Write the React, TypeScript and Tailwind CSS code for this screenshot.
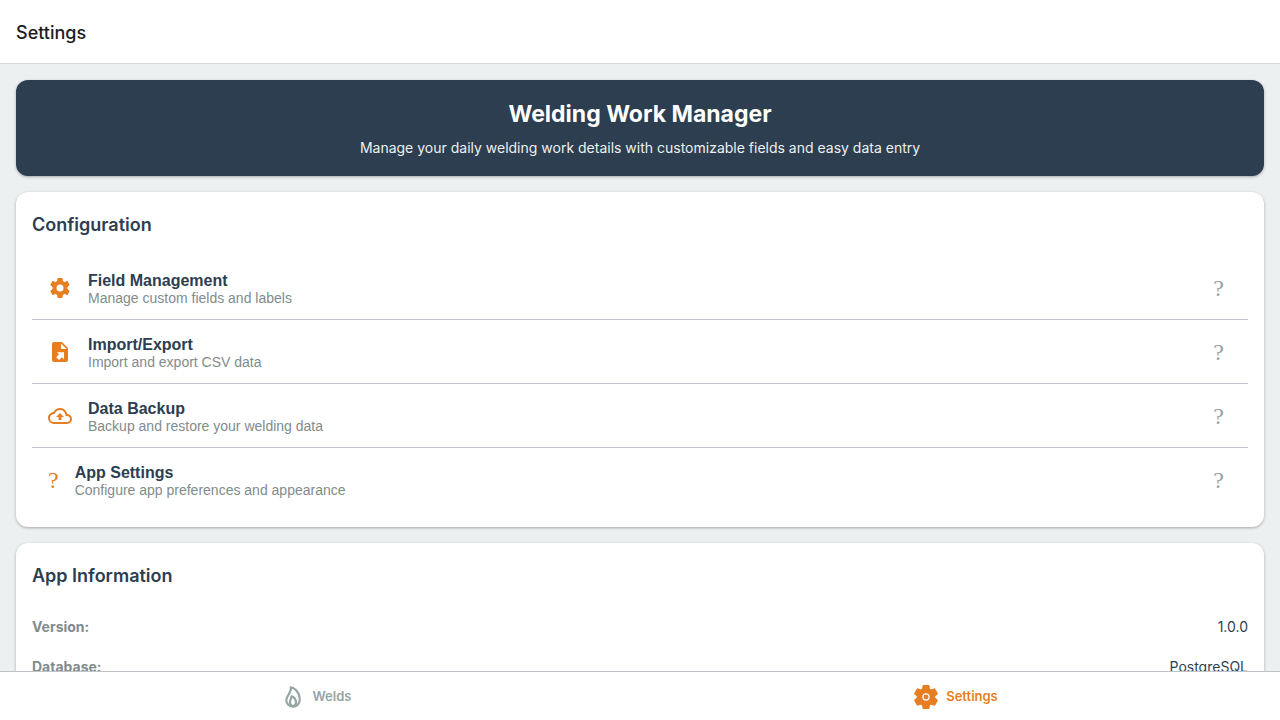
import type { ReactNode } from "react";
import { IoFlameOutline } from "react-icons/io5";

type IconProps = { path: string };

function Glyph({ path }: IconProps) {
  return (
    <svg viewBox="0 0 24 24" className="size-6 fill-current" aria-hidden="true">
      <path d={path} />
    </svg>
  );
}

const cogPath =
  "M12,15.5A3.5,3.5 0 0,1 8.5,12A3.5,3.5 0 0,1 12,8.5A3.5,3.5 0 0,1 15.5,12A3.5,3.5 0 0,1 12,15.5M19.43,12.97C19.47,12.65 19.5,12.33 19.5,12C19.5,11.67 19.47,11.34 19.43,11L21.54,9.37C21.73,9.22 21.78,8.95 21.66,8.73L19.66,5.27C19.54,5.05 19.27,4.96 19.05,5.05L16.56,6.05C16.04,5.66 15.5,5.32 14.87,5.07L14.5,2.42C14.46,2.18 14.25,2 14,2H10C9.75,2 9.54,2.18 9.5,2.42L9.13,5.07C8.5,5.32 7.96,5.66 7.44,6.05L4.95,5.05C4.73,4.96 4.46,5.05 4.34,5.27L2.34,8.73C2.21,8.95 2.27,9.22 2.46,9.37L4.57,11C4.53,11.34 4.5,11.67 4.5,12C4.5,12.33 4.53,12.65 4.57,12.97L2.46,14.63C2.27,14.78 2.21,15.05 2.34,15.27L4.34,18.73C4.46,18.95 4.73,19.03 4.95,18.95L7.44,17.94C7.96,18.34 8.5,18.68 9.13,18.93L9.5,21.58C9.54,21.82 9.75,22 10,22H14C14.25,22 14.46,21.82 14.5,21.58L14.87,18.93C15.5,18.67 16.04,18.34 16.56,17.94L19.05,18.95C19.27,19.03 19.54,18.95 19.66,18.73L21.66,15.27C21.78,15.05 21.73,14.78 21.54,14.63L19.43,12.97Z";
const filePath =
  "M6,2C4.89,2 4,2.9 4,4V20A2,2 0 0,0 6,22H18A2,2 0 0,0 20,20V8L14,2M13,3.5L18.5,9H13M8.93,12.22H16V19.29L13.88,17.17L11.05,20L8.22,17.17L11.05,14.35";
const cloudPath =
  "M19.35,10.04C18.67,6.59 15.64,4 12,4C9.11,4 6.6,5.64 5.35,8.04C2.34,8.36 0,10.91 0,14A6,6 0 0,0 6,20H19A5,5 0 0,0 24,15C24,12.36 21.95,10.22 19.35,10.04M19,18H6A4,4 0 0,1 2,14C2,11.95 3.53,10.24 5.56,10.03L6.63,9.92L7.13,8.97C8.08,7.14 9.94,6 12,6C14.62,6 16.88,7.86 17.39,10.43L17.69,11.93L19.22,12.04C20.78,12.14 22,13.45 22,15A3,3 0 0,1 19,18M8,13H10.55V16H13.45V13H16L12,9L8,13Z";

function TabGear() {
  return (
    <svg viewBox="1.5 1.5 21 21" className="size-6" aria-hidden="true">
      <path d={cogPath} fill="currentColor" stroke="currentColor" strokeWidth="1.2" strokeLinejoin="round" />
      <circle cx="12" cy="12" r="6" fill="currentColor" />
      <circle cx="12" cy="12" r="2.7" fill="none" stroke="white" strokeWidth="1.1" />
    </svg>
  );
}

const questionMark = (
  <span className="font-['Liberation_Serif',serif] text-2xl leading-6" aria-hidden="true">
    ?
  </span>
);

const options: { title: string; description: string; icon: ReactNode }[] = [
  { title: "Field Management", description: "Manage custom fields and labels", icon: <Glyph path={cogPath} /> },
  { title: "Import/Export", description: "Import and export CSV data", icon: <Glyph path={filePath} /> },
  { title: "Data Backup", description: "Backup and restore your welding data", icon: <Glyph path={cloudPath} /> },
  { title: "App Settings", description: "Configure app preferences and appearance", icon: questionMark },
];

const details = [
  { label: "Version:", value: "1.0.0" },
  { label: "Database:", value: "PostgreSQL" },
];

function Card({ title, children }: { title: string; children: ReactNode }) {
  return (
    <section className="rounded-xl bg-white p-4 shadow-[0_1px_3px_rgba(0,0,0,0.3)]">
      <h2 className="text-lg leading-[34px] font-semibold">{title}</h2>
      {children}
    </section>
  );
}

export default function App() {
  return (
    <div className="flex h-screen flex-col bg-[#ecf0f1] font-[Inter,sans-serif] text-[#2c3e50]">
      <header className="flex h-16 shrink-0 items-center border-b border-[#d8d8d8] bg-white px-4 pt-0.5">
        <h1 className="text-lg font-medium text-[#1c1c1e]">Settings</h1>
      </header>

      <main className="flex min-h-0 flex-1 flex-col gap-4 overflow-y-auto p-4 [scrollbar-width:none]">
        <section className="shrink-0 rounded-xl bg-[#2c3e50] p-4 text-center shadow-[0_1px_3px_rgba(0,0,0,0.3)]">
          <h2 className="text-[23px] leading-9 font-bold text-white">Welding Work Manager</h2>
          <p className="mt-1 text-sm leading-6 text-[#ecf0f1]">
            Manage your daily welding work details with customizable fields and easy data entry
          </p>
        </section>

        <Card title="Configuration">
          <ul className="mt-[14px] divide-y divide-[#c3c3cc] font-['Liberation_Sans',sans-serif]">
            {options.map((option) => (
              <li key={option.title}>
                <button type="button" className="flex h-[63px] w-full items-center gap-4 pr-6 pl-4 text-left">
                  <span className="flex text-[#e67e22]">{option.icon}</span>
                  <span className="flex-1">
                    <span className="block text-base leading-5 font-bold">{option.title}</span>
                    <span className="block text-sm leading-[14px] text-[#7f8c8d]">{option.description}</span>
                  </span>
                  <span className="flex text-[#95a5a6]">{questionMark}</span>
                </button>
              </li>
            ))}
          </ul>
        </Card>

        <Card title="App Information">
          <dl className="mt-[14px] text-sm leading-5">
            {details.map((detail) => (
              <div key={detail.label} className="flex justify-between py-[10px]">
                <dt className="font-bold text-[#7f8c8d]">{detail.label}</dt>
                <dd>{detail.value}</dd>
              </div>
            ))}
          </dl>
        </Card>
      </main>

      <nav className="grid h-[49px] shrink-0 grid-cols-2 border-t border-[#bdc3c7] bg-white pt-0.5 text-[13px] font-semibold">
        <a href="#welds" className="flex items-center justify-center gap-2 pr-2 text-[#95a5a6]">
          <IoFlameOutline className="size-6 [&_path]:stroke-[46px]" />
          Welds
        </a>
        <a href="#settings" aria-current="page" className="flex items-center justify-center gap-2 pr-2 text-[#e67e22]">
          <TabGear />
          Settings
        </a>
      </nav>
    </div>
  );
}
